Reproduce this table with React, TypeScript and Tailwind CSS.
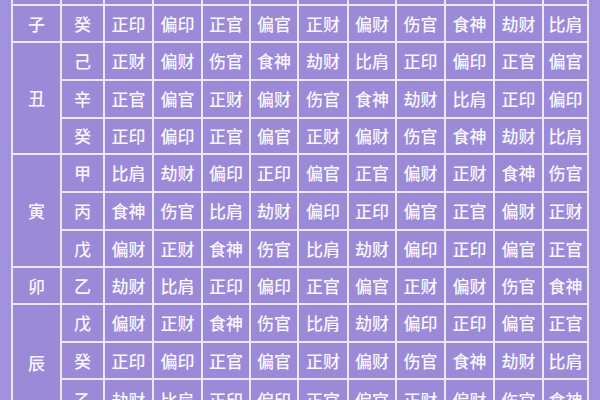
import { Fragment } from "react";

const gods: Record<string, string[]> = {
  癸: ["正印", "偏印", "正官", "偏官", "正财", "偏财", "伤官", "食神", "劫财", "比肩"],
  己: ["正财", "偏财", "伤官", "食神", "劫财", "比肩", "正印", "偏印", "正官", "偏官"],
  辛: ["正官", "偏官", "正财", "偏财", "伤官", "食神", "劫财", "比肩", "正印", "偏印"],
  甲: ["比肩", "劫财", "偏印", "正印", "偏官", "正官", "偏财", "正财", "食神", "伤官"],
  丙: ["食神", "伤官", "比肩", "劫财", "偏印", "正印", "偏官", "正官", "偏财", "正财"],
  戊: ["偏财", "正财", "食神", "伤官", "比肩", "劫财", "偏印", "正印", "偏官", "正官"],
  乙: ["劫财", "比肩", "正印", "偏印", "正官", "偏官", "正财", "偏财", "伤官", "食神"],
};

const branches = [
  { name: "子", stems: ["癸"], span: "row-span-1" },
  { name: "丑", stems: ["己", "辛", "癸"], span: "row-span-3" },
  { name: "寅", stems: ["甲", "丙", "戊"], span: "row-span-3" },
  { name: "卯", stems: ["乙"], span: "row-span-1" },
  { name: "辰", stems: ["戊", "癸", "乙"], span: "row-span-3" },
];

const cell = "bg-[#9a8ad7] flex items-center justify-center";

export default function App() {
  return (
    <div
      className="w-[600px] h-[400px] overflow-hidden bg-[#a092dd] pl-[11px] text-[#f8f6ff] text-[17px] font-medium"
      style={{ fontFamily: '"Noto Sans CJK SC", "Noto Sans", sans-serif' }}
    >
      <div className="grid w-[578px] bg-[#ece8fb] gap-[2px] px-[2px] grid-cols-[47px_41px_47px_47px_46px_46px_48px_46px_47px_47px_47px_43px] grid-rows-[4px_35px_36px_36px_34px_36px_36px_35px_35px_36px_35px_40px]">
        {/* header row, cut off at the top */}
        {Array.from({ length: 12 }).map((_, i) => (
          <div key={"h" + i} className="bg-[#9a8ad7]" />
        ))}
        {branches.map((b) =>
          b.stems.map((s, si) => (
            <Fragment key={b.name + si}>
              {si === 0 && (
                <div className={`${cell} ${b.span} col-start-1`}>{b.name}</div>
              )}
              <div className={`${cell} col-start-2`}>{s}</div>
              {gods[s].map((g, gi) => (
                <div key={gi} className={cell}>
                  {g}
                </div>
              ))}
            </Fragment>
          ))
        )}
      </div>
    </div>
  );
}
